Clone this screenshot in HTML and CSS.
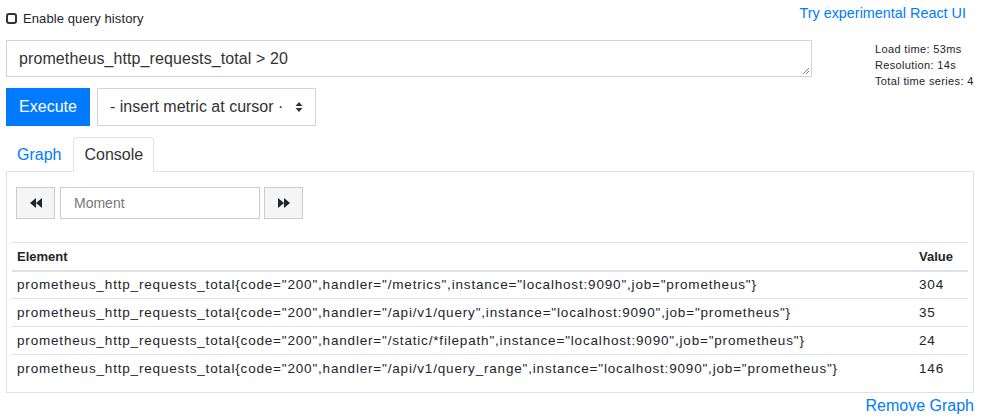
FILE: index.html
```html
<!DOCTYPE html>
<html>
<head>
<meta charset="utf-8">
<link rel="stylesheet" href="styles.css">
</head>
<body>
<div class="page">
  <div class="toprow">
    <label class="history"><span class="checkbox"></span>Enable query history</label>
    <a class="link react-link" href="#">Try experimental React UI</a>
  </div>
  <div class="queryrow">
    <div class="expr">prometheus_http_requests_total &gt; 20<svg class="grip" width="8" height="8" viewBox="0 0 8 8"><path d="M7 1 L1 7 M7 4 L4 7" stroke="#888" stroke-width="1"/></svg></div>
    <div class="stats">
      <div>Load time: 53ms</div>
      <div>Resolution: 14s</div>
      <div>Total time series: 4</div>
    </div>
  </div>
  <div class="actionrow">
    <button class="execute">Execute</button>
    <div class="select">- insert metric at cursor ·<svg class="updown" width="8" height="12" viewBox="0 0 8 12"><path d="M4 1 L7.5 5 L0.5 5 Z M4 11 L7.5 7 L0.5 7 Z" fill="#333"/></svg></div>
  </div>
  <div class="tabs">
    <div class="tab">Graph</div>
    <div class="tab active">Console</div>
  </div>
  <div class="panel">
    <div class="moment">
      <div class="navbtn"><svg width="12" height="10" viewBox="0 0 12 10"><path d="M6 0 L0 5 L6 10 Z M12 0 L6 5 L12 10 Z" fill="#212529"/></svg></div>
      <div class="momentinput">Moment</div>
      <div class="navbtn"><svg width="12" height="10" viewBox="0 0 12 10"><path d="M0 0 L6 5 L0 10 Z M6 0 L12 5 L6 10 Z" fill="#212529"/></svg></div>
    </div>
    <table class="results">
      <thead>
        <tr><th>Element</th><th class="val">Value</th></tr>
      </thead>
      <tbody>
        <tr><td>prometheus_http_requests_total{code="200",handler="/metrics",instance="localhost:9090",job="prometheus"}</td><td class="val">304</td></tr>
        <tr><td>prometheus_http_requests_total{code="200",handler="/api/v1/query",instance="localhost:9090",job="prometheus"}</td><td class="val">35</td></tr>
        <tr><td>prometheus_http_requests_total{code="200",handler="/static/*filepath",instance="localhost:9090",job="prometheus"}</td><td class="val">24</td></tr>
        <tr><td>prometheus_http_requests_total{code="200",handler="/api/v1/query_range",instance="localhost:9090",job="prometheus"}</td><td class="val">146</td></tr>
      </tbody>
    </table>
  </div>
  <div class="bottomrow">
    <a class="link remove" href="#">Remove Graph</a>
  </div>
</div>
</body>
</html>
```

FILE: styles.css
```css
* { box-sizing: border-box; }
body {
  margin: 0;
  font-family: "Liberation Sans", Arial, sans-serif;
  color: #212529;
  background: #fff;
}
.page {
  padding: 0 11px 0 6px;
  width: 985px;
}
.link { color: #007bff; text-decoration: none; }
.toprow {
  display: flex;
  justify-content: space-between;
  align-items: center;
  height: 36px;
}
.history {
  display: flex;
  align-items: center;
  font-size: 13px;
  letter-spacing: 0.1px;
}
.checkbox {
  width: 11px;
  height: 11px;
  border: 2px solid #333;
  border-radius: 3px;
  margin-right: 6px;
}
.react-link { font-size: 14.4px; margin-top: -10px; margin-right: 8px; }
.queryrow {
  display: flex;
  margin-top: 4px;
  height: 37px;
}
.expr {
  position: relative;
  width: 806px;
  height: 37px;
  border: 1px solid #ced4da;
  font-size: 16px;
  padding: 8px 12px;
  line-height: 20px;
  color: #333;
  letter-spacing: 0.1px;
}
.grip { position: absolute; right: 1px; bottom: 1px; }
.stats {
  margin-left: 63px;
  margin-top: 1px;
  font-size: 11px;
  line-height: 16px;
  letter-spacing: 0.35px;
  white-space: nowrap;
}
.actionrow {
  display: flex;
  margin-top: 11px;
  gap: 7px;
}
.execute {
  width: 84px;
  height: 38px;
  background: #007bff;
  border: 1px solid #007bff;
  color: #fff;
  font-family: inherit;
  font-size: 16px;
  padding: 0;
}
.select {
  width: 219px;
  height: 38px;
  border: 1px solid #ced4da;
  display: flex;
  align-items: center;
  justify-content: space-between;
  padding: 0 12px 0 12px;
  font-size: 16px;
  color: #333;
}
.tabs {
  display: flex;
  margin-top: 11px;
  border-bottom: 1px solid #dee2e6;
  height: 35px;
}
.tab {
  font-size: 16px;
  padding: 0 11px 0 10px;
  line-height: 34px;
  color: #007bff;
  border: 1px solid transparent;
  border-radius: 4px 4px 0 0;
  margin-bottom: -1px;
}
.tab.active {
  color: #333;
  padding: 0 10px;
  border-color: #dee2e6 #dee2e6 #fff;
  background: #fff;
}
.panel {
  border: 1px solid #dee2e6;
  border-top: none;
  padding: 15px 5px 10px 5px;
  height: 221px;
}
.moment {
  display: flex;
  margin-left: 4px;
  height: 32px;
}
.navbtn {
  width: 39px;
  height: 32px;
  border: 1px solid #ccc;
  background: #f5f5f5;
  display: flex;
  align-items: center;
  justify-content: center;
}
.momentinput {
  width: 200px;
  margin: 0 4px 0 5px;
  border: 1px solid #ccc;
  font-size: 14px;
  color: #777;
  padding-left: 13px;
  display: flex;
  align-items: center;
}
.results {
  margin-top: 23px;
  width: 100%;
  border-collapse: collapse;
  font-size: 13px;
}
.results th, .results td {
  text-align: left;
  padding: 0 5px;
  height: 28px;
  border-top: 1px solid #dee2e6;
}
.results td {
  font-size: 13.5px;
  letter-spacing: 0.82px;
}
.results th { border-bottom: 2px solid #dee2e6; }
.results .val { width: 54px; }
.bottomrow {
  display: flex;
  justify-content: flex-end;
  padding-top: 4px;
}
.remove { font-size: 16px; }
```
